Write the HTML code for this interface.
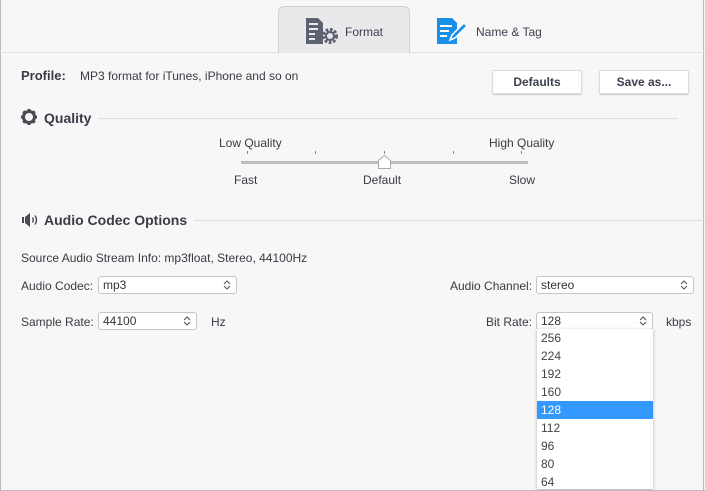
<!DOCTYPE html><html><head><style>
body{margin:0;width:705px;height:491px;background:#f7f7f7;font-family:"Liberation Sans",sans-serif;font-size:12px;color:#3a3a44;position:relative;overflow:hidden}
.a{position:absolute;white-space:nowrap}
.sel{position:absolute;height:18px;border:1px solid #c6c6c6;border-radius:3px;background:#fff;box-sizing:border-box;padding-left:4px;line-height:16px;font-size:12px;color:#333}
.chev{position:absolute;right:5px;top:3px}
.btn{position:absolute;height:22px;background:#fff;border:1px solid #ddd;border-radius:2px;box-shadow:0 1px 1px #ccc;font-weight:bold;text-align:center;line-height:22px;color:#3d4150;font-size:12px}
.bold{font-weight:bold;font-size:14px;color:#3b3b48}
</style></head><body>
<div class="a" style="left:0;top:0;width:1px;height:491px;background:#bbb"></div>
<div class="a" style="right:1px;top:0;width:1px;height:491px;background:#bbb"></div>
<div class="a" style="left:0;top:490px;width:705px;height:1px;background:#bbb"></div>
<div class="a" style="left:0;top:52px;width:705px;height:1px;background:#e0e0e0"></div>
<div class="a" style="left:278px;top:6px;width:132px;height:47px;background:#e9e9ec;border:1px solid #d2d2d2;border-bottom:none;border-radius:6px 6px 0 0;box-sizing:border-box"></div>
<svg class="a" style="left:306px;top:18px" width="34" height="26" viewBox="0 0 34 26"><path d="M0 0h12l5 5v21H0z" fill="#5e6270"/><path d="M3 6h9M3 11h9M3 16h6M3 21h6" stroke="#e9e9ec" stroke-width="2"/><circle cx="24" cy="18" r="6" fill="none" stroke="#5e6270" stroke-width="4" stroke-dasharray="2.5 1.5"/><circle cx="24" cy="18" r="4" fill="none" stroke="#5e6270" stroke-width="2"/></svg>
<div class="a" style="left:345px;top:25px;font-size:12px;color:#3d4150">Format</div>
<svg class="a" style="left:437px;top:18px" width="34" height="26" viewBox="0 0 34 26"><path d="M0 0h15l5 5v21H0z" fill="#1a8fe8"/><path d="M3 8h12M3 13h9M3 18h7" stroke="#fff" stroke-width="2"/><path d="M13 22l2-5 12-12 3 3-12 12z" fill="#1a8fe8" stroke="#fff" stroke-width="1.5"/></svg>
<div class="a" style="left:476px;top:25px;color:#3d4150">Name &amp; Tag</div>
<div class="a bold" style="left:21px;top:68px;font-size:13px">Profile:</div>
<div class="a" style="left:80px;top:69px">MP3 format for iTunes, iPhone and so on</div>
<div class="btn" style="left:492px;top:70px;width:88px">Defaults</div>
<div class="btn" style="left:599px;top:70px;width:88px">Save as...</div>
<svg class="a" style="left:21px;top:109px" width="16" height="16" viewBox="0 0 16 16"><circle cx="8" cy="8" r="5.5" fill="none" stroke="#4a4a55" stroke-width="3"/><g stroke="#4a4a55" stroke-width="3"><path d="M8 0v3M8 13v3M0 8h3M13 8h3M2.3 2.3l2.1 2.1M11.6 11.6l2.1 2.1M2.3 13.7l2.1-2.1M11.6 4.4l2.1-2.1"/></g></svg>
<div class="a bold" style="left:44px;top:110px">Quality</div>
<div class="a" style="left:98px;top:118px;width:580px;height:1px;background:#ddd"></div>
<div class="a" style="left:219px;top:136px">Low Quality</div>
<div class="a" style="left:489px;top:136px">High Quality</div>
<div class="a" style="left:241px;top:161px;width:287px;height:3px;background:#bdbdbd"></div>
<div class="a" style="left:247px;top:151px;width:1px;height:3px;background:#888"></div>
<div class="a" style="left:315px;top:151px;width:1px;height:3px;background:#888"></div>
<div class="a" style="left:384px;top:151px;width:1px;height:3px;background:#888"></div>
<div class="a" style="left:453px;top:151px;width:1px;height:3px;background:#888"></div>
<div class="a" style="left:521px;top:151px;width:1px;height:3px;background:#888"></div>
<svg class="a" style="left:378px;top:155px" width="13" height="14"><path d="M0.5 5.5L6.5 0.5L12.5 5.5V13.5H0.5z" fill="#fff" stroke="#aaa"/></svg>
<div class="a" style="left:234px;top:173px">Fast</div>
<div class="a" style="left:363px;top:173px">Default</div>
<div class="a" style="left:509px;top:173px">Slow</div>
<svg class="a" style="left:22px;top:213px" width="18" height="14" viewBox="0 0 18 14"><path d="M0 4h2v6H0zM3 4l5-4v14l-5-4z" fill="#4a4a55"/><path d="M10.5 4.5q1.5 2.5 0 5M13 2.5q3 4.5 0 9" fill="none" stroke="#4a4a55" stroke-width="1.4"/></svg>
<div class="a bold" style="left:44px;top:212px">Audio Codec Options</div>
<div class="a" style="left:194px;top:220px;width:511px;height:1px;background:#ddd"></div>
<div class="a" style="left:21px;top:251px">Source Audio Stream Info: mp3float, Stereo, 44100Hz</div>
<div class="a" style="left:21px;top:279px">Audio Codec:</div>
<div class="sel" style="left:98px;top:276px;width:139px">mp3<svg class="chev" width="8" height="10"><path d="M1 4l3-3 3 3M1 6l3 3 3-3" fill="none" stroke="#555" stroke-width="1.1"/></svg></div>
<div class="a" style="left:450px;top:279px">Audio Channel:</div>
<div class="sel" style="left:536px;top:276px;width:158px">stereo<svg class="chev" width="8" height="10"><path d="M1 4l3-3 3 3M1 6l3 3 3-3" fill="none" stroke="#555" stroke-width="1.1"/></svg></div>
<div class="a" style="left:21px;top:315px">Sample Rate:</div>
<div class="sel" style="left:98px;top:312px;width:99px">44100<svg class="chev" width="8" height="10"><path d="M1 4l3-3 3 3M1 6l3 3 3-3" fill="none" stroke="#555" stroke-width="1.1"/></svg></div>
<div class="a" style="left:211px;top:315px">Hz</div>
<div class="a" style="left:486px;top:315px">Bit Rate:</div>
<div class="sel" style="left:536px;top:312px;width:117px">128<svg class="chev" width="8" height="10"><path d="M1 4l3-3 3 3M1 6l3 3 3-3" fill="none" stroke="#555" stroke-width="1.1"/></svg></div>
<div class="a" style="left:666px;top:315px">kbps</div>
<div class="a" style="left:537px;top:329px;width:116px;height:160px;background:#fff;box-shadow:0 1px 3px #aaa;line-height:18px;font-size:12px;color:#444">
<div style="padding-left:4px">256</div><div style="padding-left:4px">224</div><div style="padding-left:4px">192</div><div style="padding-left:4px">160</div><div style="padding-left:4px;background:#3399ff;color:#fff">128</div><div style="padding-left:4px">112</div><div style="padding-left:4px">96</div><div style="padding-left:4px">80</div><div style="padding-left:4px">64</div></div>
</body></html>
